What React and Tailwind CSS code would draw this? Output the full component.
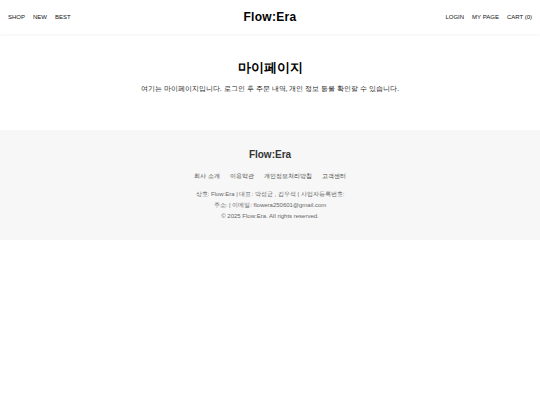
import React from 'react';

const categories = ['SHOP', 'NEW', 'BEST'];
const accountLinks = ['LOGIN', 'MY PAGE', 'CART (0)'];
const footerLinks = ['회사 소개', '이용약관', '개인정보처리방침', '고객센터'];

const NavLinks = ({ items, label }) => (
  <nav aria-label={label} className="flex flex-1 gap-2 last:justify-end">
    {items.map((item) => (
      <a key={item} href="#" className="whitespace-nowrap">
        {item}
      </a>
    ))}
  </nav>
);

const Header = () => (
  <header className="flex items-center bg-white px-2 py-2 text-[6px] leading-[18px] text-[#111] shadow-[0_1px_3px_rgba(0,0,0,0.05)]">
    <NavLinks items={categories} label="Shop" />
    <a href="#" className="text-[12px] leading-[18px] font-bold tracking-wide text-black">
      Flow:Era
    </a>
    <NavLinks items={accountLinks} label="Account" />
  </header>
);

const Footer = () => (
  <footer className="bg-[#f7f7f7] px-5 py-[18px] text-center text-[6px] text-[#666]">
    <p className="text-[10px] leading-[14px] font-bold text-[#333]">Flow:Era</p>
    <nav aria-label="Footer" className="mt-2 flex justify-center gap-[10px] leading-3 text-[#444]">
      {footerLinks.map((item) => (
        <a key={item} href="#">
          {item}
        </a>
      ))}
    </nav>
    <div className="mt-[7px] leading-[11px]">
      <p>상호: Flow:Era | 대표: 박성균 , 김우석 | 사업자등록번호:</p>
      <p>주소: | 이메일: flowera250601@gmail.com</p>
      <p>© 2025 Flow:Era. All rights reserved.</p>
    </div>
  </footer>
);

const App = () => (
  <div className="bg-white font-['Liberation_Sans',sans-serif] text-black">
    <Header />
    <main className="px-5 pt-6 pb-9 text-center">
      <h1 className="text-[13px] leading-5 font-bold">마이페이지</h1>
      <p className="mt-[6px] text-[7px] leading-[10px] text-[#222]">
        여기는 마이페이지입니다. 로그인 후 주문 내역, 개인 정보 등을 확인할 수 있습니다.
      </p>
    </main>
    <Footer />
  </div>
);

export default App;
